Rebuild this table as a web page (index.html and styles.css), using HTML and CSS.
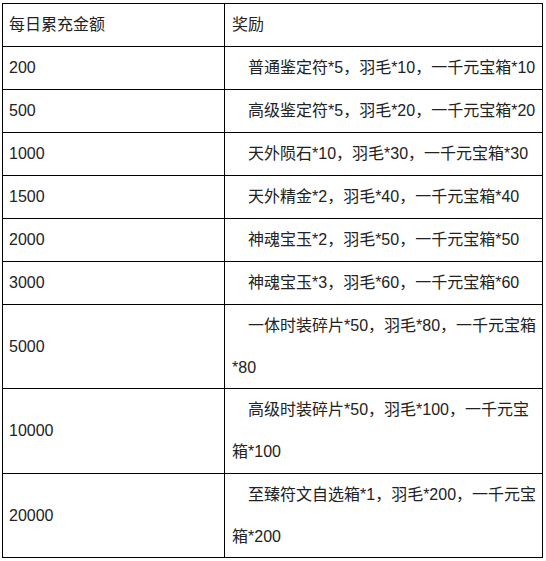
FILE: index.html
```html
<!DOCTYPE html>
<html lang="zh-CN">
<head>
<meta charset="utf-8">
<title>每日累充奖励</title>
<link rel="stylesheet" href="styles.css">
</head>
<body>
<table class="rewards">
  <colgroup>
    <col class="col-amount">
    <col class="col-reward">
  </colgroup>
  <tr>
    <td class="amount">每日累充金额</td>
    <td class="reward head">奖励</td>
  </tr>
  <tr>
    <td class="amount">200</td>
    <td class="reward">普通鉴定符*5，羽毛*10，一千元宝箱*10</td>
  </tr>
  <tr>
    <td class="amount">500</td>
    <td class="reward">高级鉴定符*5，羽毛*20，一千元宝箱*20</td>
  </tr>
  <tr>
    <td class="amount">1000</td>
    <td class="reward">天外陨石*10，羽毛*30，一千元宝箱*30</td>
  </tr>
  <tr>
    <td class="amount">1500</td>
    <td class="reward">天外精金*2，羽毛*40，一千元宝箱*40</td>
  </tr>
  <tr>
    <td class="amount">2000</td>
    <td class="reward">神魂宝玉*2，羽毛*50，一千元宝箱*50</td>
  </tr>
  <tr>
    <td class="amount">3000</td>
    <td class="reward">神魂宝玉*3，羽毛*60，一千元宝箱*60</td>
  </tr>
  <tr class="tall">
    <td class="amount">5000</td>
    <td class="reward">一体时装碎片*50，羽毛*80，一千元宝箱<br>*80</td>
  </tr>
  <tr class="tall">
    <td class="amount">10000</td>
    <td class="reward">高级时装碎片*50，羽毛*100，一千元宝<br>箱*100</td>
  </tr>
  <tr class="tall">
    <td class="amount">20000</td>
    <td class="reward">至臻符文自选箱*1，羽毛*200，一千元宝<br>箱*200</td>
  </tr>
</table>
</body>
</html>
```
FILE: styles.css
```css
html, body {
  margin: 0;
  padding: 0;
  background: #ffffff;
}

body {
  padding: 3px 0 0 2px;
  font-family: "Liberation Sans", "Noto Sans CJK SC", sans-serif;
  font-size: 16px;
  color: #222222;
}

.rewards {
  border-collapse: collapse;
  width: 540px;
  table-layout: fixed;
}

.col-amount {
  width: 222px;
}

.col-reward {
  width: 318px;
}

.rewards td {
  border: 1px solid #000000;
  line-height: 42px;
  padding: 0 2px 0 7px;
  vertical-align: middle;
  white-space: nowrap;
  overflow: hidden;
}

.rewards td.amount {
  padding-left: 6px;
}

.reward {
  text-indent: 16px;
}

.reward.head {
  text-indent: 0;
}

.tall td {
  line-height: 41.7px;
}
```
